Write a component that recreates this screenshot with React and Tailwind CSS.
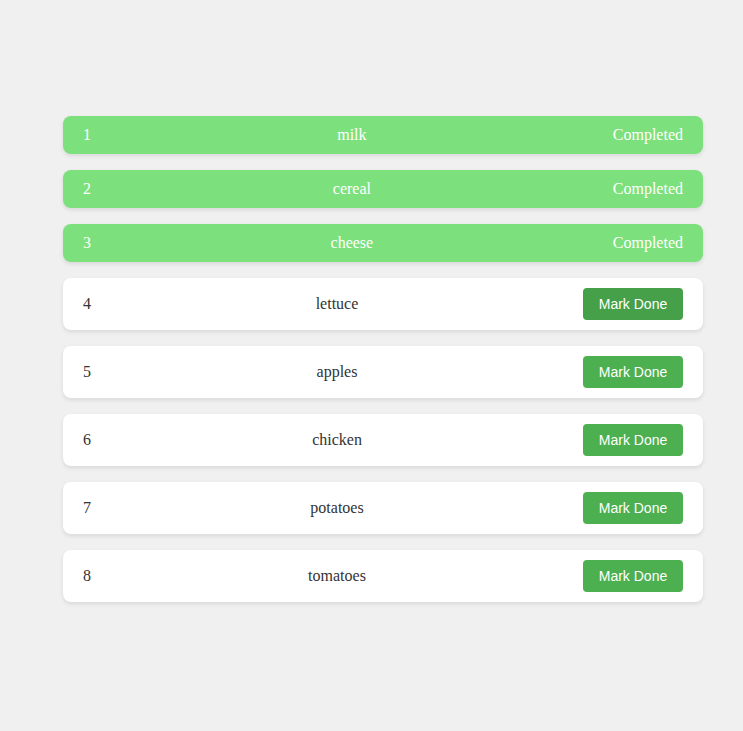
import React, { useState } from 'react';

const initialItems = [
  { id: 1, name: 'milk', done: true },
  { id: 2, name: 'cereal', done: true },
  { id: 3, name: 'cheese', done: true },
  { id: 4, name: 'lettuce', done: false },
  { id: 5, name: 'apples', done: false },
  { id: 6, name: 'chicken', done: false },
  { id: 7, name: 'potatoes', done: false },
  { id: 8, name: 'tomatoes', done: false },
];

const App = () => {
  const [items, setItems] = useState(initialItems);

  const markDone = (id) => {
    setItems(items.map((item) => (item.id === id ? { ...item, done: true } : item)));
  };

  return (
    <div className="min-h-screen bg-[#f0f0f0] pt-[116px] pb-10 font-['Liberation_Serif',serif]">
      <ul className="ml-[63px] flex w-[640px] flex-col gap-4">
        {items.map((item, i) =>
          item.done ? (
            <li
              key={item.id}
              className="flex items-center justify-between rounded-lg bg-[#7ce07c] px-5 py-[10px] text-base leading-[18px] text-white shadow-[0_2px_4px_rgba(0,0,0,0.1)]"
            >
              <span>{item.id}</span>
              <span>{item.name}</span>
              <span>Completed</span>
            </li>
          ) : (
            <li
              key={item.id}
              className="flex items-center justify-between rounded-lg bg-white px-5 py-[10px] text-base text-[#333] shadow-[0_2px_4px_rgba(0,0,0,0.1)]"
            >
              <span>{item.id}</span>
              <span>{item.name}</span>
              <button
                onClick={() => markDone(item.id)}
                className={`h-8 w-[100px] rounded text-sm text-white font-['Liberation_Sans',Arial,sans-serif] hover:bg-[#45a049] ${i === 3 ? 'bg-[#45a049]' : 'bg-[#4caf50]'}`}
              >
                Mark Done
              </button>
            </li>
          )
        )}
      </ul>
    </div>
  );
};

export default App;
